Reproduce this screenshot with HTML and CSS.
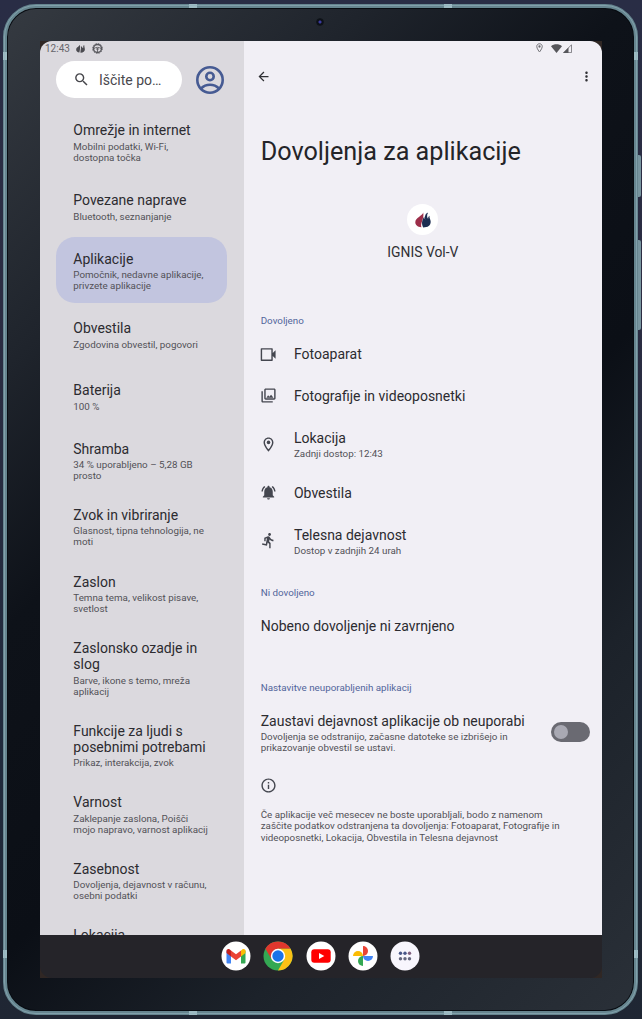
FILE: index.html
```html
<!DOCTYPE html>
<html lang="sl">
<head>
<meta charset="utf-8">
<title>Dovoljenja za aplikacije</title>
<link rel="stylesheet" href="styles.css">
</head>
<body>
<div class="key key-power"></div>
<div class="key key-volume"></div>
<div class="device">
  <i class="band b1"></i><i class="band b2"></i><i class="band b3"></i><i class="band b4"></i>
  <i class="band v b5"></i><i class="band v b6"></i><i class="band v b7"></i><i class="band v b8"></i>
  <i class="camera"></i>
  <div class="screen-back">
  <div class="screen">
    <div class="panes">
      <aside class="sidebar">
        <div class="status">
          <span>12:43</span>
          <svg class="s-flame" viewBox="0 0 16 16"><path d="M7 1.500C5.500 4.500.3 6 .3 10.200c0 2.500 2 4.300 5.700 5C6.800 11 8 7 7 1.500z" fill="#4b4b50"/><path d="M9.500 3C8.300 5 9.500 7 8.500 9.500c-.5 2-.7 4-.5 6 4.500.2 7.800-1.900 7.800-5.700 0-2.500-1-4.300-1.300-8.300-1.600 1.500-2 3.500-1.600 5.800-1.700-.6-2.900-2-3.400-4.300z" fill="#4b4b50"/></svg>
          <svg class="s-wheel" viewBox="0 0 22 22"><circle cx="11" cy="11" r="8" fill="none" stroke="#58585d" stroke-width="3"/><circle cx="11" cy="11" r="10" fill="none" stroke="#58585d" stroke-width="1.500" stroke-dasharray="3 2.200"/><path d="M4 11c4-3 10-3 14 0M11 10v9M8 12h6" fill="none" stroke="#58585d" stroke-width="1.700"/></svg>
        </div>
        <div class="search-row">
          <div class="search">
            <svg viewBox="0 0 24 24"><path fill="#46464b" d="M15.500 14h-.79l-.28-.27A6.470 6.470 0 0 0 16 9.500 6.500 6.500 0 1 0 9.500 16c1.610 0 3.090-.59 4.230-1.570l.27.28v.79l5 4.990L20.490 19l-4.990-5zm-6 0C7.010 14 5 11.990 5 9.500S7.010 5 9.500 5 14 7.010 14 9.500 11.990 14 9.500 14z"/></svg>
            <span>Iščite po…</span>
          </div>
          <svg class="avatar" viewBox="0 0 28 28" fill="none" stroke="#465b93" stroke-width="2.600"><circle cx="14" cy="14" r="12.700"/><circle cx="14" cy="10.500" r="3.700"/><path d="M5 22.500c5-5 13-5 18 0"/></svg>
        </div>
        <nav>
          <div class="item gap4"><b>Omrežje in internet</b><small>Mobilni podatki, Wi-Fi,<br>dostopna točka</small></div>
          <div class="item"><b>Povezane naprave</b><small>Bluetooth, seznanjanje</small></div>
          <div class="item active gap3"><b>Aplikacije</b><small>Pomočnik, nedavne aplikacije,<br>privzete aplikacije</small></div>
          <div class="item gap4"><b>Obvestila</b><small>Zgodovina obvestil, pogovori</small></div>
          <div class="item"><b>Baterija</b><small>100 %</small></div>
          <div class="item"><b>Shramba</b><small>34 % uporabljeno – 5,28 GB<br>prosto</small></div>
          <div class="item"><b>Zvok in vibriranje</b><small>Glasnost, tipna tehnologija, ne<br>moti</small></div>
          <div class="item"><b>Zaslon</b><small>Temna tema, velikost pisave,<br>svetlost</small></div>
          <div class="item"><b>Zaslonsko ozadje in<br>slog</b><small>Barve, ikone s temo, mreža<br>aplikacij</small></div>
          <div class="item"><b>Funkcije za ljudi s<br>posebnimi potrebami</b><small>Prikaz, interakcija, zvok</small></div>
          <div class="item"><b>Varnost</b><small>Zaklepanje zaslona, Poišči<br>mojo napravo, varnost aplikacij</small></div>
          <div class="item"><b>Zasebnost</b><small>Dovoljenja, dejavnost v računu,<br>osebni podatki</small></div>
          <div class="item"><b>Lokacija</b></div>
        </nav>
      </aside>
      <main class="main">
        <div class="status right">
          <svg class="s-pin" viewBox="0 0 14 20"><path d="M7 1.500C3.500 1.500 1.500 4 1.500 7 1.500 11 7 18 7 18s5.500-7 5.500-11c0-3-2-5.500-5.500-5.500z" fill="none" stroke="#66666b" stroke-width="1.800"/><circle cx="7" cy="7" r="2.300" fill="#66666b"/></svg>
          <svg class="s-wifi" viewBox="0 0 22 18"><path d="M0 4.500C6-.8 16-.8 22 4.500L11 18z" fill="#56565b"/></svg>
          <svg class="s-cell" viewBox="0 0 18 18"><path d="M1.500 17.200 17 1.500v15.700z" fill="none" stroke="#66666b" stroke-width="1.500"/><path d="M0 18 11 7v11z" fill="#56565b"/></svg>
        </div>
        <div class="appbar">
          <svg viewBox="0 0 24 24"><path fill="#303034" d="M20 11H7.830l5.590-5.590L12 4l-8 8 8 8 1.410-1.410L7.830 13H20v-2z"/></svg>
          <svg viewBox="0 0 24 24"><path fill="#303034" d="M12 8c1.100 0 2-.9 2-2s-.9-2-2-2-2 .9-2 2 .9 2 2 2zm0 2c-1.100 0-2 .9-2 2s.9 2 2 2 2-.9 2-2-.9-2-2-2zm0 6c-1.100 0-2 .9-2 2s.9 2 2 2 2-.9 2-2-.9-2-2-2z"/></svg>
        </div>
        <h1>Dovoljenja za aplikacije</h1>
        <div class="app">
          <div class="app-icon"><svg viewBox="0 0 16 16"><path d="M8.200.5C7.500 4 .3 5.500.3 10.200c0 2.600 1.900 4.500 6.200 5.100C4.800 12 9.500 6.500 8.200.5z" fill="#9c2e49"/><path d="M9.300 4.500C8 6.500 7 9 7 11c0 1.800.6 3.200 1.200 4.500 4.700 0 7.500-2 7.500-5.700 0-2.500-1.600-3.300-1.200-6-1.200.8-1.500 1.800-1.300 3.200C12 5.500 11.500 3 13.200.5c-3 1-3.700 4-2.900 7.200C9.600 6.800 9.300 5.800 9.300 4.500z" fill="#1b2c50"/></svg></div>
          <span>IGNIS Vol-V</span>
        </div>
        <h2>Dovoljeno</h2>
        <div class="perm"><svg viewBox="0 0 24 24"><path fill="#44464f" d="M1 4a1 1 0 0 1 1-1h15a1 1 0 0 1 1 1v6l4-4v12l-4-4v6a1 1 0 0 1-1 1H2a1 1 0 0 1-1-1zm2 1v14h13V5z"/></svg><div><b>Fotoaparat</b></div></div>
        <div class="perm"><svg viewBox="0 0 24 24"><path fill="#44464f" d="M20 4v12H8V4h12m0-2H8c-1.100 0-2 .9-2 2v12c0 1.100.9 2 2 2h12c1.100 0 2-.9 2-2V4c0-1.100-.9-2-2-2zm-8.500 9.670 1.690 2.260 2.480-3.100L19 15H9zM2 6v14c0 1.100.9 2 2 2h14v-2H4V6H2z"/></svg><div><b>Fotografije in videoposnetki</b></div></div>
        <div class="perm two"><svg viewBox="0 0 24 24"><path fill="#44464f" d="M12 2C8.130 2 5 5.130 5 9c0 5.250 7 13 7 13s7-7.750 7-13c0-3.870-3.130-7-7-7zM7 9c0-2.760 2.240-5 5-5s5 2.240 5 5c0 2.880-2.880 7.190-5 9.880C9.920 16.210 7 11.850 7 9z"/><circle fill="#44464f" cx="12" cy="9" r="2.500"/></svg><div><b>Lokacija</b><small>Zadnji dostop: 12:43</small></div></div>
        <div class="perm"><svg viewBox="0 0 24 24"><path fill="#44464f" d="M7.580 4.080 6.150 2.650C3.750 4.480 2.170 7.300 2.030 10.500h2c.15-2.650 1.510-4.970 3.550-6.420zm12.390 6.420h2c-.15-3.200-1.730-6.020-4.120-7.850l-1.420 1.430c2.020 1.450 3.390 3.770 3.540 6.420zM18 11c0-3.070-1.640-5.640-4.500-6.320V4c0-.83-.67-1.500-1.500-1.500s-1.500.67-1.500 1.500v.68C7.630 5.360 6 7.920 6 11v5l-2 2v1h16v-1l-2-2v-5zm-6 11c1.100 0 2-.9 2-2h-4c0 1.100.9 2 2 2z"/></svg><div><b>Obvestila</b></div></div>
        <div class="perm two"><svg viewBox="0 0 24 24"><path fill="#44464f" d="M13.490 5.480c1.100 0 2-.9 2-2s-.9-2-2-2-2 .9-2 2 .9 2 2 2zm-3.600 13.900 1-4.400 2.100 2v6h2v-7.500l-2.100-2 .6-3c1.300 1.500 3.300 2.500 5.500 2.500v-2c-1.900 0-3.500-1-4.300-2.400l-1-1.600c-.4-.6-1-1-1.700-1-.3 0-.5.1-.8.1l-5.200 2.200v4.700h2v-3.400l1.800-.7-1.600 8.100-4.900-1-.4 2 7 1.400z"/></svg><div><b>Telesna dejavnost</b><small>Dostop v zadnjih 24 urah</small></div></div>
        <h2 class="denied">Ni dovoljeno</h2>
        <p class="none">Nobeno dovoljenje ni zavrnjeno</p>
        <h2 class="unused">Nastavitve neuporabljenih aplikacij</h2>
        <div class="toggle-row">
          <div><b>Zaustavi dejavnost aplikacije ob neuporabi</b><small>Dovoljenja se odstranijo, začasne datoteke se izbrišejo in<br>prikazovanje obvestil se ustavi.</small></div>
          <span class="toggle"></span>
        </div>
        <svg class="info" viewBox="0 0 24 24"><path fill="#44464f" d="M11 7h2v2h-2zm0 4h2v6h-2zm1-9C6.480 2 2 6.480 2 12s4.480 10 10 10 10-4.480 10-10S17.520 2 12 2zm0 18c-4.410 0-8-3.590-8-8s3.590-8 8-8 8 3.590 8 8-3.590 8-8 8z"/></svg>
        <p class="note">Če aplikacije več mesecev ne boste uporabljali, bodo z namenom<br>zaščite podatkov odstranjena ta dovoljenja: Fotoaparat, Fotografije in<br>videoposnetki, Lokacija, Obvestila in Telesna dejavnost</p>
      </main>
    </div>
    <footer class="dock">
      <svg viewBox="0 0 30 30"><circle cx="15" cy="15" r="14.500" fill="#fff"/><path d="M5.500 9.500 10 13v9.500H6.500a1 1 0 0 1-1-1z" fill="#4285f4"/><path d="M24.500 9.500 20 13v9.500h3.500a1 1 0 0 0 1-1z" fill="#34a853"/><path d="M20 9.500l1.500-1.200c1.300-.9 3 0 3 1.500V12L20 15.500z" fill="#fbbc04"/><path d="M10 9.500 8.500 8.300c-1.300-.9-3 0-3 1.500V12l4.500 3.500z" fill="#c5221f"/><path d="M10 9.500l5 3.800 5-3.800v6l-5 3.800-5-3.800z" fill="#ea4335"/></svg>
      <svg viewBox="0 0 30 30"><circle cx="15" cy="15" r="14.500" fill="#34a853"/><path d="M2.440 7.750A14.500 14.500 0 0 1 27.560 7.750H15L8.700 18.600z" fill="#e0372d"/><path d="M27.560 7.750A14.500 14.500 0 0 1 15 29.500L21.300 18.600 15 7.750z" fill="#fbc116"/><circle cx="15" cy="15" r="7.200" fill="#fff"/><circle cx="15" cy="15" r="5.700" fill="#1a73e8"/></svg>
      <svg viewBox="0 0 30 30"><circle cx="15" cy="15" r="14.500" fill="#fff"/><rect x="5.300" y="8.200" width="19.400" height="13.600" rx="3" fill="#f00"/><path d="m13 12 5.300 3-5.300 3z" fill="#fff"/></svg>
      <svg viewBox="0 0 30 30"><circle cx="15" cy="15" r="14.500" fill="#fff"/><path d="M15 15V5a5 5 0 0 1 0 10z" fill="#ea4335"/><path d="M15 15h10a5 5 0 0 1-10 0z" fill="#4285f4"/><path d="M15 15v10a5 5 0 0 1 0-10z" fill="#34a853"/><path d="M15 15H5a5 5 0 0 1 10 0z" fill="#fbbc04"/></svg>
      <svg viewBox="0 0 30 30"><circle cx="15" cy="15" r="14.500" fill="#f8f6fd"/><g fill="#485688"><circle cx="10.500" cy="12.300" r="1.700"/><circle cx="15" cy="12.300" r="1.700"/></g><circle cx="19.500" cy="12.300" r="1.700" fill="#80607f"/><g fill="#65677f"><circle cx="10.500" cy="17.800" r="1.700"/><circle cx="15" cy="17.800" r="1.700"/><circle cx="19.500" cy="17.800" r="1.700"/></g></svg>
    </footer>
  </div>
  </div>
</div>
</body>
</html>
```
FILE: styles.css
```css
* { box-sizing: border-box; }
body {
  margin: 0;
  width: 642px;
  height: 1019px;
  padding: 4px 4px 4px 3px;
  overflow: hidden;
  position: relative;
  font-family: Roboto, "Noto Sans", sans-serif;
  color: #303034;
  background: linear-gradient(180deg, #292d45 0, #2b2c42 30%, #202a3c 75%, #1f2633 100%);
}
b, h1, h2 { font-weight: 400; }
b, small { display: block; }
svg { display: block; flex: none; }
p, h1, h2 { margin: 0; }

.device {
  width: 635px;
  height: 1011px;
  border: 4px solid #66858f;
  border-radius: 33px;
  position: relative;
  padding: 33px;
  background:
    linear-gradient(135deg, #353a41 0%, #1f242c 22%, #0e1219 38%, #0b0f16 58%, #1c222a 76%, #2a3038 100%);
  box-shadow: inset 0 0 0 1px #080c12;
}
.device::after {
  content: "";
  position: absolute;
  inset: -3px;
  border: 1px solid #93b3be;
  border-radius: 32px;
  opacity: .6;
  pointer-events: none;
}
.band { position: absolute; width: 8px; height: 4px; background: #9dbbc3; }
.band.v { width: 4px; height: 8px; }
.b1 { left: 182px; top: -4px; }
.b2 { left: 437px; top: -4px; }
.b3 { left: 182px; bottom: -4px; }
.b4 { left: 437px; bottom: -4px; }
.b5 { left: -4px; top: 44px; }
.b6 { right: -4px; top: 44px; }
.b7 { left: -4px; bottom: 53px; }
.b8 { right: -4px; bottom: 53px; }
.camera {
  position: absolute;
  left: 309px;
  top: 10px;
  width: 8px;
  height: 8px;
  border-radius: 50%;
  background: radial-gradient(circle, #3a3aa0 0 1px, #0c1017 2px);
  border: 1px solid #10141a;
}
.key { position: absolute; left: 637px; width: 4px; background: #78959f; border-radius: 0 2px 2px 0; }
.key-power { top: 155px; height: 42px; }
.key-volume { top: 240px; height: 90px; }

.screen-back { width: 562px; height: 937px; background: #302724; }
.screen {
  width: 562px;
  height: 937px;
  border-radius: 12px;
  overflow: hidden;
  display: flex;
  flex-direction: column;
  background: #252429;
}
.panes { display: flex; height: 894px; overflow: hidden; }
.sidebar { width: 203.500px; background: #dbd9de; padding-left: 16px; }
.main { flex: 1; background: #f1eff5; padding-left: 17.200px; }

.status {
  display: flex;
  align-items: center;
  height: 15px;
  margin-left: -11px;
  font-size: 10px;
  color: #66656a;
}
.s-flame { width: 9px; height: 9px; margin-left: 6px; }
.s-wheel { width: 11px; height: 11px; margin-left: 7px; }
.status.right { margin: 0; justify-content: flex-end; padding-right: 30px; }
.s-pin { width: 7px; height: 10px; margin-right: 8px; margin-top: -1px; }
.s-wifi { width: 11px; height: 9px; margin-right: 1px; }
.s-cell { width: 9px; height: 9px; }

.search-row { display: flex; align-items: center; margin-top: 5px; height: 37px; }
.search {
  width: 126px;
  height: 37px;
  border-radius: 19px;
  background: #fff;
  display: flex;
  align-items: center;
  padding-left: 17px;
  font-size: 14px;
  color: #49484d;
}
.search svg { width: 17px; height: 17px; margin-right: 9px; }
.avatar { width: 28px; height: 28px; margin: 0 0 0 14px; }

nav { padding-top: 10.300px; }
.item {
  width: 171px;
  min-height: 58.500px;
  padding: 13.900px 0 12.200px 17.300px;
  white-space: nowrap;
}
.item b { font-size: 14px; line-height: 16.200px; color: #2c2b30; }
.item small { font-size: 9.800px; line-height: 11px; color: #525157; padding-top: 2.200px; }
.gap4 { margin-bottom: 3.500px; }
.gap3 { margin-bottom: 3px; }
.active { background: #c2c5df; border-radius: 19px; }

.appbar { display: flex; justify-content: space-between; height: 41px; align-items: center; padding: 0 8.500px 0 0; margin-left: -5px; }
.appbar svg { width: 15px; height: 15px; }
h1 { font-size: 25.200px; line-height: 30px; margin-top: 40px; color: #242428; white-space: nowrap; }
.app { display: flex; flex-direction: column; align-items: center; margin: 37px 17px 0 0; }
.app-icon { width: 31px; height: 31px; border-radius: 50%; background: #fff; display: flex; align-items: center; justify-content: center; }
.app-icon svg { width: 16px; height: 16px; }
.app span { font-size: 13.900px; line-height: 16px; margin-top: 9px; }
h2 { font-size: 9.800px; line-height: 12px; color: #51659b; margin-top: 55px; margin-bottom: 7px; }
.perm { display: flex; align-items: center; height: 41.700px; }
.perm.two { height: 55px; }
.perm svg { width: 17px; height: 17px; margin: -1.500px 16.800px 0 -.5px; }
.perm b, .none, .toggle-row b { font-size: 14px; line-height: 17px; color: #2c2b30; }
.perm small, .toggle-row small { font-size: 9.800px; line-height: 11px; color: #525157; }
.perm small { padding-top: 1px; }
h2.denied { margin-top: 18px; }
.none { margin-top: 18.500px; }
h2.unused { margin-top: 47px; }
.toggle-row { display: flex; justify-content: space-between; margin-top: 19.200px; padding-right: 12px; white-space: nowrap; }
.toggle-row small { padding-top: 1.500px; }
.toggle { flex: none; width: 39px; height: 20px; border-radius: 10px; background: #6a6a72; padding: 3px; margin-top: 9.500px; }
.toggle::before { content: ""; display: block; width: 14px; height: 14px; border-radius: 50%; background: #a9a9b3; }
.info { width: 17px; height: 17px; margin-top: 23.500px; margin-left: -.5px; }
.note { margin-top: 15.500px; font-size: 9.800px; line-height: 11.200px; color: #525157; white-space: nowrap; }

.dock { height: 42px; display: flex; justify-content: center; align-items: center; gap: 12.200px; padding-right: 1px; }
.dock svg { width: 30px; height: 30px; }
```
